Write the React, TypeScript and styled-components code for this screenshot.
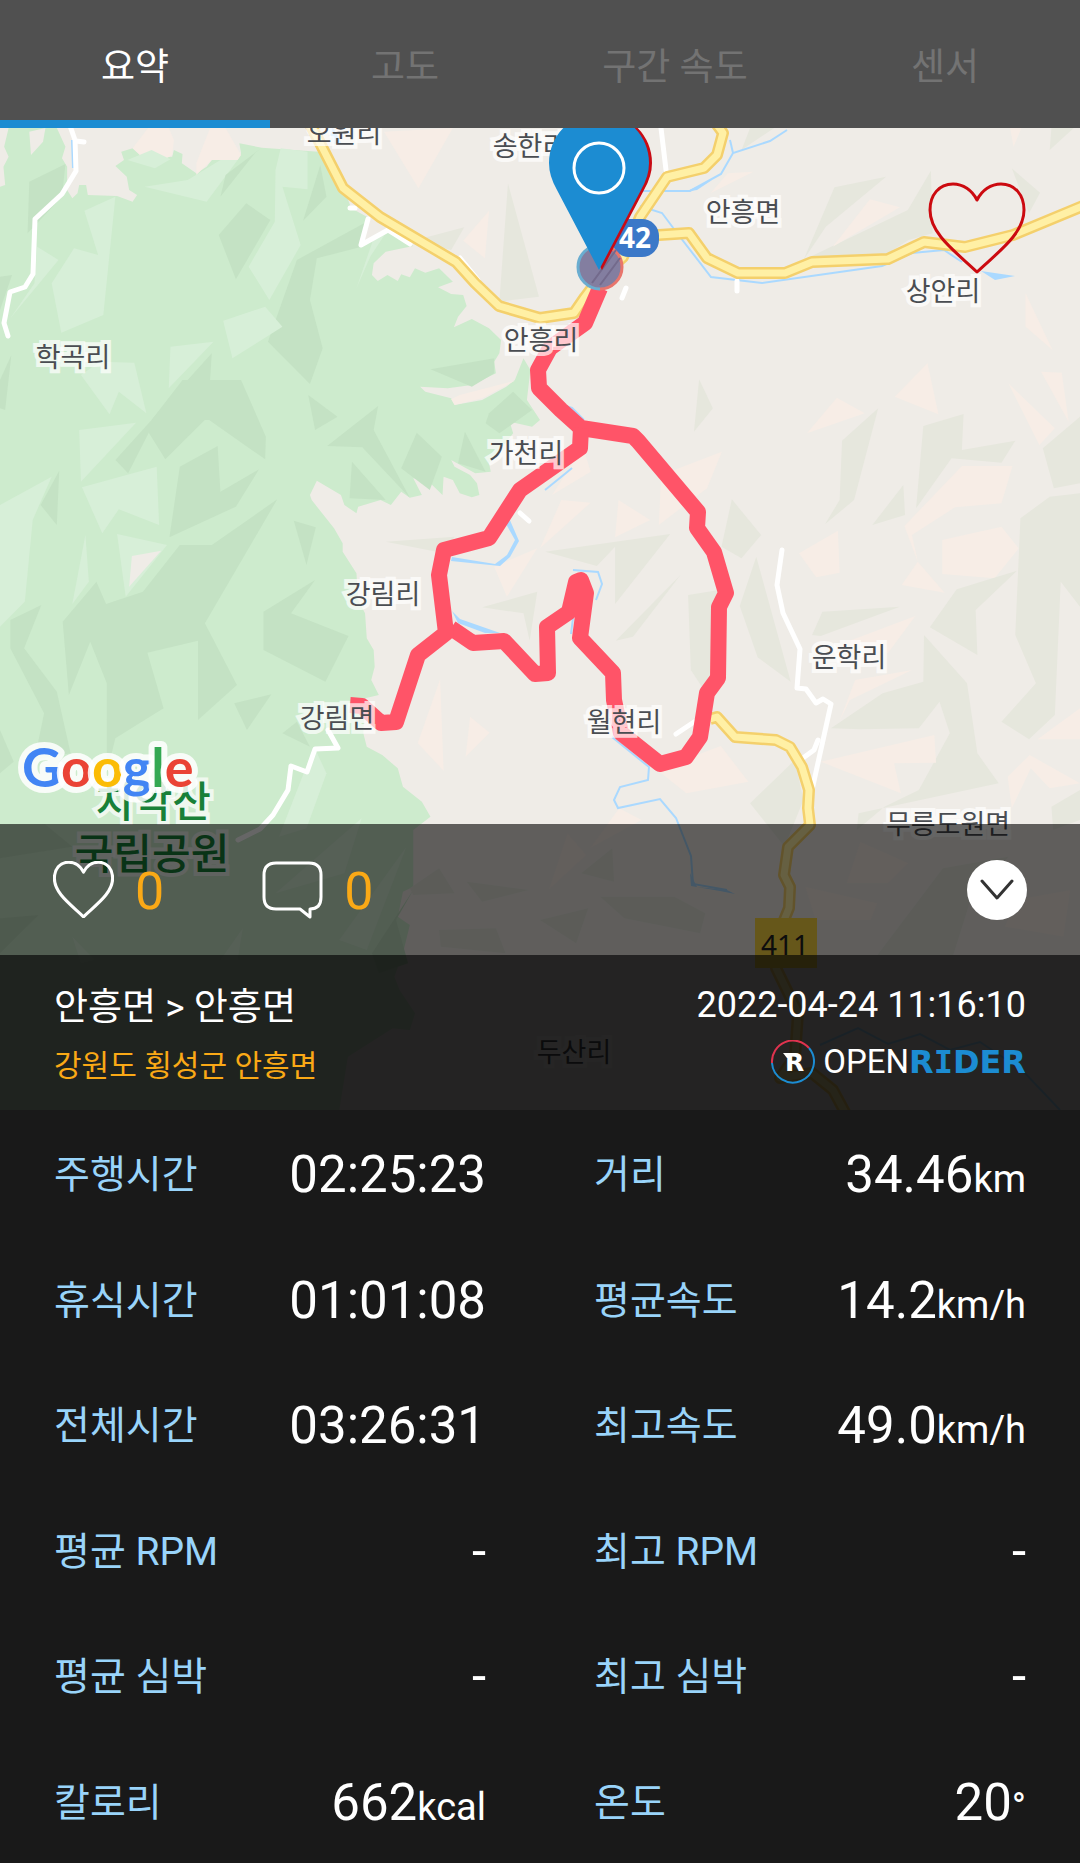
import React, { useState } from "react";
import styled, { createGlobalStyle } from "styled-components";

const color = {
  page: "#191919",
  bar: "#505050",
  accent: "#1c8cd2",
  label: "#99d4fa",
  orange: "#faa916",
  land: "#efece7",
  forest: "#cdebcd",
  forestLight: "#d7efd8",
  forestDark: "#c4e2c4",
  hill: "#e6e7dd",
  sand: "#f7ede6",
  water: "#aad9ff",
  route: "#ff5468",
};

const GlobalStyle = createGlobalStyle`
  *, *::before, *::after { box-sizing: border-box; }
  body {
    margin: 0;
    background: ${color.page};
    color: #fff;
    font-family: Roboto, "Noto Sans CJK KR", sans-serif;
  }
  button { font: inherit; }
`;

const Page = styled.main`
  display: flex;
  flex-direction: column;
  min-height: 100vh;
`;

const TabBar = styled.nav`
  display: grid;
  grid-template-columns: repeat(4, 1fr);
  height: 128px;
  background: ${color.bar};
`;

const Tab = styled.button<{ $active: boolean }>`
  border: 0;
  border-top: 8px solid transparent;
  border-bottom: 8px solid ${(p) => (p.$active ? color.accent : "transparent")};
  padding: 7px 0 0;
  background: none;
  color: ${(p) => (p.$active ? "#fff" : "#737373")};
  font-size: 37px;
  line-height: 52px;
  cursor: pointer;
`;

const Hero = styled.section`
  position: relative;
  display: grid;
`;

const MapCanvas = styled.svg`
  grid-area: 1 / 1;
  display: block;
  width: 100%;
  height: auto;
  background: ${color.land};
`;

const MapLabel = styled.text<{ $park?: boolean }>`
  font-family: "Noto Sans CJK KR", sans-serif;
  font-size: ${(p) => (p.$park ? 42 : 27)}px;
  font-weight: ${(p) => (p.$park ? 500 : 400)};
  fill: ${(p) => (p.$park ? "#188038" : "#4a4d52")};
  stroke: rgba(255, 255, 255, 0.7);
  stroke-width: 8px;
  paint-order: stroke;
  text-anchor: middle;
`;

const RoadNumber = styled.text<{ $bold?: boolean }>`
  font-family: "Noto Sans", sans-serif;
  font-size: 28px;
  font-weight: ${(p) => (p.$bold ? 700 : 400)};
  fill: ${(p) => (p.$bold ? "#fff" : "#222")};
  text-anchor: middle;
`;

const GoogleMark = styled.text`
  font-family: Lato, sans-serif;
  font-size: 54px;
  font-weight: 700;
  stroke: rgba(255, 255, 255, 0.85);
  stroke-width: 12px;
  stroke-linejoin: round;
  paint-order: stroke;
`;

const FavoriteButton = styled.button`
  position: absolute;
  top: 54px;
  right: 54px;
  width: 98px;
  height: 92px;
  padding: 0;
  border: 0;
  background: none;
  color: #cc0a10;
  cursor: pointer;
`;

const Overlay = styled.div`
  grid-area: 1 / 1;
  align-self: end;
  z-index: 1;
`;

const ActionBar = styled.div`
  display: flex;
  align-items: center;
  gap: 98px;
  height: 131px;
  padding: 0 53px;
  background: rgba(0, 0, 0, 0.6);
`;

const CountButton = styled.button`
  display: flex;
  align-items: center;
  gap: 21px;
  padding: 0;
  border: 0;
  background: none;
  color: #fff;
  cursor: pointer;
`;

const Count = styled.span`
  color: ${color.orange};
  font-size: 52px;
  line-height: 60px;
  padding-top: 4px;
`;

const CollapseButton = styled.button`
  display: flex;
  align-items: center;
  justify-content: center;
  width: 60px;
  height: 60px;
  margin-left: auto;
  padding: 0;
  border: 0;
  border-radius: 50%;
  background: #fff;
  color: #333;
  cursor: pointer;
`;

const Icon = styled.svg`
  display: block;
  fill: none;
  stroke: currentColor;
  stroke-linecap: round;
  stroke-linejoin: round;
`;

const RideInfo = styled.header`
  display: grid;
  grid-template-columns: 1fr auto;
  row-gap: 6px;
  align-items: start;
  padding: 24px 54px 18px;
  background: rgba(0, 0, 0, 0.85);
`;

const Title = styled.h1`
  margin: 0;
  padding-top: 3px;
  font-size: 37px;
  font-weight: 400;
  line-height: 52px;
`;

const RideDate = styled.time`
  font-size: 36px;
  line-height: 52px;
  text-align: right;
`;

const Region = styled.p`
  margin: 0;
  color: ${color.orange};
  font-size: 30px;
  line-height: 52px;
`;

const Brand = styled.div`
  display: flex;
  align-items: center;
  justify-content: flex-end;
  height: 44px;
  font-size: 33px;
  line-height: 44px;
`;

const BrandIcon = styled.svg`
  display: block;
  margin-right: 8px;
`;

const BrandBold = styled.b`
  font-family: "DejaVu Sans", sans-serif;
  font-size: 32px;
  font-weight: 700;
  color: ${color.accent};
`;

const Slab = styled.span`
  font-family: "DejaVu Sans Mono", monospace;
`;

const Stats = styled.dl`
  flex: 1;
  display: grid;
  grid-template-columns: 1fr 1fr;
  grid-auto-rows: minmax(100px, 1fr);
  margin: 0;
`;

const Stat = styled.div`
  display: flex;
  align-items: center;
  justify-content: space-between;
  padding: 5px 54px 0;
`;

const StatLabel = styled.dt`
  color: ${color.label};
  font-size: 39px;
  line-height: 60px;
`;

const StatValue = styled.dd`
  margin: 0;
  font-size: 51px;
  line-height: 60px;
`;

const Unit = styled.span`
  font-size: 38px;
  line-height: 1;
`;

type Shape = [fill: string, points: string];

const forestOutline =
  "25,384 165,384 190,440 180,475 195,500 195,570 210,595 225,580 230,555 250,555 255,585 340,588 385,605 398,585 375,570 368,530 335,498 360,480 352,455 385,445 420,478 500,470 505,450 530,462 528,490 570,520 600,500 615,480 690,480 700,460 695,430 760,443 925,455 970,535 1000,570 1020,625 1065,650 1045,740 1120,695 1200,738 1120,755 1085,790 1080,825 1097,843 1125,825 1155,843 1165,823 1190,832 1205,805 1235,818 1275,805 1315,845 1272,862 1310,882 1345,885 1355,918 1330,950 1318,982 1370,957 1420,985 1455,1020 1450,1060 1435,1085 1440,1120 1370,1155 1300,1165 1220,1160 1235,1175 1310,1195 1320,1215 1400,1200 1470,1160 1495,1140 1520,1075 1540,1110 1530,1200 1568,1260 1545,1280 1480,1265 1490,1300 1420,1390 1425,1415 1380,1420 1310,1380 1320,1400 1365,1425 1385,1450 1392,1485 1370,1492 1335,1480 1315,1440 1288,1430 1285,1485 1240,1440 1200,1435 1225,1485 1190,1493 1165,1475 1135,1515 1105,1500 1040,1520 1035,1540 1000,1515 990,1485 920,1442 900,1485 905,1500 970,1585 995,1630 995,1655 1035,1720 1040,1800 1060,1840 1065,1915 1085,1950 1088,2000 1078,2040 1100,2085 1060,2095 1055,2200 1065,2240 1110,2265 1155,2305 1170,2360 1225,2405 1250,2450 1200,2490 1200,2660 1170,2675 1155,2750 1190,2775 1170,2860 1145,2930 1160,2970 1205,3040 1190,3090 1140,3085 1010,3170 985,3330 0,3330 0,560 15,555 10,500 25,470 12,440";

const westNorth: Shape[] = [
  [color.land, "85,395 132,384 125,425 90,465"],
  [color.sand, "430,384 490,384 505,420 500,465 470,482 420,478 385,445"],
  [color.sand, "610,384 655,384 700,465 690,480 615,480 570,525 570,490"],
  [color.forestDark, "85,545 190,492 180,590 80,700"],
  [color.forestLight, "245,632 335,590 300,945 178,998 150,850 215,745 285,765"],
  [color.forestLight, "108,740 170,780 30,955 100,850"],
  [color.forestLight, "370,480 440,450 495,478 450,505"],
  [color.forestLight, "420,560 545,540 640,480 690,480 600,605"],
  [color.forestDark, "640,590 655,525 760,443 740,460"],
  [color.forestDark, "635,705 715,610 785,660 685,838"],
  [color.forestLight, "800,510 815,445 893,455 893,568 820,560 873,735 782,900 722,800 798,665"],
  [color.forestDark, "930,495 948,590 880,662"],
  [color.forestDark, "1065,665 1050,740 920,775 900,900 937,1045 900,1152 778,1025 862,780"],
  [color.forestLight, "1035,865 1085,715 1120,700 1075,770"],
  [color.forestLight, "648,962 770,920 820,980 675,1075"],
  [color.forestLight, "495,1040 620,1025 490,1165"],
  [color.forestLight, "235,1125 290,1085 390,1088 425,1240 345,1175 318,1243"],
  [color.forestDark, "440,1260 615,1060 610,1140 710,1260"],
  [color.forestDark, "0,830 35,825 0,930"],
  [color.forestDark, "0,1140 33,1065 15,1230 0,1225"],
  [color.forestDark, "1250,1108 1435,1075 1435,1120 1370,1160"],
  [color.forestDark, "895,1185 980,1250 915,1290"],
  [color.sand, "1310,1198 1335,1185 1495,1142 1400,1195 1320,1215"],
  [color.sand, "1115,395 1315,384 1215,565"],
  [color.hill, "1475,550 1565,890 1450,905"],
  [color.sand, "1345,722 1420,632 1408,775"],
  [color.hill, "1200,722 1348,682 1310,750"],
];

const westSouth: Shape[] = [
  [color.forestDark, "440,60 530,-60 700,-60 772,110 770,178 600,55 480,178 432,98 372,220 335,180"],
  [color.forestLight, "230,90 395,68 235,245"],
  [color.forestLight, "238,262 455,200 462,375 345,328 297,400"],
  [color.forestDark, "632,138 640,275 752,208 685,320 492,412 522,200"],
  [color.forestDark, "172,212 165,375 118,315"],
  [color.forestLight, "150,230 95,360 72,605 0,680 0,315"],
  [color.forestDark, "805,298 595,670 688,855 575,960 575,722 428,758 475,925 335,1015 310,1120 310,850 262,725 200,885 182,665 280,545 308,612 415,575 522,435 615,435"],
  [color.forestLight, "248,405 258,545 210,612"],
  [color.forestLight, "340,402 485,435 365,590"],
  [color.land, "383,468 468,452 375,560"],
  [color.forestDark, "30,660 120,615 70,745 165,875 205,1060 100,1080 128,940 30,745"],
  [color.forestDark, "853,362 917,382 890,495"],
  [color.forestDark, "950,138 1098,18 1085,90 1190,293 1052,142"],
  [color.forestDark, "1210,98 1283,170 1248,270 1165,205"],
  [color.forestDark, "1350,95 1410,215 1330,190"],
  [color.forestDark, "1022,185 1120,300 1015,295"],
  [color.forestDark, "1420,40 1490,-25 1545,30 1450,100 1410,70"],
  [color.forestDark, "915,540 845,640 1012,708 945,845 765,750 765,635"],
  [color.forestDark, "680,910 788,883 717,990"],
  [color.forestDark, "820,1000 862,965 900,1040"],
  [color.forestDark, "0,990 40,1085 0,1120"],
  [color.forestLight, "912,1040 948,1120 890,1285 810,1310"],
  [color.hill, "1120,425 1320,410 1290,460"],
  [color.sand, "1435,500 1560,445 1472,590"],
  [color.hill, "1400,622 1560,575 1538,722 1520,640"],
  [color.sand, "1278,838 1288,1112 1213,1030"],
  [color.sand, "1365,950 1422,998 1352,1070"],
  [color.forestDark, "0,1275 130,1272 210,1340 0,1375"],
  [color.forestLight, "800,1480 1050,1255 1000,1420"],
  [color.forestLight, "985,1620 1180,1340 1065,1650"],
  [color.forestDark, "1080,1660 1200,1470 1150,1560 1185,1690 1100,1720"],
  [color.forestDark, "0,1555 112,1545 0,1660"],
  [color.forestLight, "210,1610 275,1680 235,1690"],
  [color.forestLight, "705,1585 690,1680 640,1680"],
  [color.hill, "1190,1465 1275,1405 1320,1480 1200,1485"],
  [color.hill, "1355,1445 1535,1470 1400,1505"],
  [color.hill, "1275,1590 1440,1585 1468,1660 1280,1640"],
];

const eastNorth: Shape[] = [
  [color.hill, "610,384 680,384 585,450"],
  [color.sand, "1365,384 1398,384 1375,440"],
  [color.hill, "1485,384 1550,384 1480,450"],
  [color.hill, "855,562 1005,530 830,680 765,780"],
  [color.sand, "545,520 620,515 495,580"],
  [color.hill, "1135,512 1140,700 1070,720 980,780 765,780 1068,630"],
  [color.sand, "958,598 1045,622 850,740"],
  [color.hill, "1370,505 1452,578 1420,640"],
  [color.sand, "1410,880 1488,1050 1410,980"],
  [color.sand, "1125,1090 1157,1243 1030,1190"],
  [color.sand, "1455,1115 1515,1118 1535,1265"],
  [color.sand, "1360,1150 1495,1285 1450,1335"],
  [color.hill, "462,1138 502,1225 447,1295"],
  [color.sand, "862,1193 943,1240 775,1300"],
];

const eastSouth: Shape[] = [
  [color.hill, "982,25 912,300 828,372 870,300 877,122"],
  [color.hill, "1113,78 1230,42 1225,150 1380,122 1340,188 1195,175 1092,325"],
  [color.sand, "1225,198 1372,198 1340,310 1205,322 1080,405 1097,485 1058,378"],
  [color.hill, "1055,255 1060,345 965,375"],
  [color.hill, "1568,50 1568,250 1492,265 1460,145"],
  [color.hill, "1568,280 1568,620 1512,545 1495,945 1420,1018 1340,965 1440,850 1380,705 1395,355 1480,290"],
  [color.sand, "1168,420 1340,380 1390,445 1320,535 1168,522"],
  [color.sand, "865,392 870,518 802,532 752,460"],
  [color.sand, "1080,405 1097,485 1175,578 1050,555 1097,485"],
  [color.hill, "1210,568 1385,512 1265,630 1270,765 1132,682"],
  [color.sand, "125,140 147,215 35,285"],
  [color.sand, "62,300 147,308 0,445"],
  [color.sand, "228,300 320,360 218,412"],
  [color.sand, "352,225 528,155 485,265 345,375"],
  [color.hill, "15,455 378,402 218,612 218,440 165,498"],
  [color.hill, "408,525 270,710 220,722"],
  [color.hill, "557,298 642,405 585,475 527,440"],
  [color.hill, "628,470 728,845 632,772 580,618"],
  [color.hill, "430,585 520,570 498,860 470,860 438,810"],
  [color.hill, "820,635 1045,620 815,708 790,705"],
  [color.sand, "1090,648 1010,760 880,730"],
  [color.hill, "1115,705 1240,850 1270,1060 1332,1150 925,1240 920,1290 1000,1220 1100,1170 1190,1000 1160,905 1100,985 930,988 845,985 995,880 1113,845"],
  [color.sand, "1080,810 915,840 870,962 900,900"],
  [color.sand, "815,1085 1145,1005 1150,1088 1028,1090 1048,1180"],
  [color.sand, "1568,925 1568,1018 1445,1018"],
  [color.sand, "1422,1065 1568,1150 1480,1165 1425,1105 1370,1225 1358,1130"],
  [color.hill, "1485,1220 1568,1170 1568,1260 1490,1290"],
  [color.sand, "340,1110 525,1038 605,1145 425,1180"],
  [color.hill, "740,1080 765,1200 710,1340 610,1210"],
  [color.sand, "230,1225 295,1260 145,1345"],
  [color.sand, "80,1300 135,1365 25,1470"],
  [color.hill, "210,1345 215,1445 120,1420"],
  [color.sand, "930,1325 1070,1390 1010,1450 890,1450"],
  [color.sand, "770,1460 980,1510 960,1560 800,1560"],
  [color.hill, "175,1490 390,1490 480,1540 465,1600 245,1555"],
  [color.hill, "0,1560 140,1525 105,1630"],
  [color.hill, "1170,1405 1360,1370 1250,1500 1200,1665 980,1665"],
  [color.sand, "1380,1500 1540,1470 1520,1610 1350,1580"],
];

function Terrain({ x, y, shapes }: { x: number; y: number; shapes: Shape[] }) {
  return (
    <g transform={`translate(${x} ${y}) scale(0.34439 0.33333)`}>
      {shapes.map(([fill, points]) => (
        <polygon key={points} fill={fill} points={points} />
      ))}
    </g>
  );
}

const highways = [
  "308,120 322,147 343,188 380,217 456,262 475,283 499,306 540,318 574,313 585,297 600,277 623,257 640,217 667,177 704,168 717,155 723,133 712,118",
  "640,238 659,235 689,233 707,258 738,273 785,273 812,262 888,259 924,242 965,247 1013,235 1090,203",
  "710,719 717,717 735,737 776,740 790,747 802,767 809,790 808,808 810,825 788,847 784,875 790,887 789,908 776,940 776,968 798,1013 795,1057 780,1078 812,1073 833,1090 847,1116",
];

const lanes = [
  "68,120 75,140 76,171 62,194 35,219 33,274 25,287 10,292 4,323 8,336",
  "76,141 84,142",
  "368,219 361,245 388,230 410,244",
  "350,208 355,208",
  "460,258 478,280",
  "661,128 666,170",
  "626,288 622,298",
  "737,281 737,291",
  "520,513 529,521",
  "782,550 777,585 783,613 800,649 797,688 806,689 816,703 823,699 831,704 812,790",
  "818,740 814,750 803,758",
  "676,734 694,722",
  "328,730 338,748 315,749 307,772 291,766 288,790 273,815 260,829 238,840",
];

const streams = [
  "72,140 73,168",
  "787,130 770,141 733,153 721,174 690,191 640,191",
  "730,140 733,153",
  "640,206 662,213 677,233 711,277 762,283 882,266 912,253 944,250 962,262",
  "572,468 566,473 545,490",
  "562,405 572,408 584,420",
  "573,570 598,572 602,584 596,600",
  "573,618 571,634",
  "612,737 649,767 648,780 620,787 614,800 618,808 660,799 676,818 691,856 693,884 727,890",
  "820,1045 858,1028 888,1044 920,1034 950,1050 980,1042 1022,1070 1060,1110",
];

const route = [
  "600,288 585,323 550,348 538,370 539,388 561,410 581,428 633,436 638,441 698,512 697,528 714,552 726,593 719,607 718,678 707,693 700,737 686,757 660,764 621,733 614,700 613,673 580,638 586,593 581,580 576,582 569,612 547,627 548,673 535,674 504,641 473,643 451,628",
  "581,428 580,448 540,476 520,490 489,538 444,550 439,575 446,633 418,655 396,722 381,723 362,706 350,705",
];

const places: [name: string, x: number, y: number][] = [
  ["오원리", 344, 143],
  ["송한리", 530, 156],
  ["안흥면", 743, 222],
  ["상안리", 943, 301],
  ["안흥리", 541, 350],
  ["학곡리", 73, 367],
  ["가천리", 526, 463],
  ["강림리", 383, 604],
  ["강림면", 337, 728],
  ["월현리", 624, 732],
  ["운학리", 849, 667],
  ["무릉도원면", 948, 834],
  ["두산리", 574, 1062],
];

const pinShape = "M599 270 L557 190 Q549 176 549 163 A50 50 0 0 1 649 163 Q649 176 641 190 Z";

function RouteMap() {
  return (
    <MapCanvas viewBox="0 128 1080 982" role="img" aria-label="주행 경로 지도">
      <g transform="scale(0.34439 0.33333)">
        <polygon fill={color.forest} points={forestOutline} />
      </g>
      <Terrain x={0} y={0} shapes={westNorth} />
      <Terrain x={0} y={400} shapes={westSouth} />
      <Terrain x={540} y={0} shapes={eastNorth} />
      <Terrain x={540} y={400} shapes={eastSouth} />

      <g fill="none" stroke={color.water} strokeWidth={2}>
        {streams.map((points) => (
          <polyline key={points} points={points} />
        ))}
      </g>
      <g fill={color.water}>
        <path d="M981 271 L1015 276 L995 280Z M328 128 L334 144 L342 144 L333 128Z M509 518 L519 541 L510 557 L500 566 L451 561 L452 557 L495 564 L507 555 L515 540 L506 524Z M452 611 L460 619 L500 633 L485 633 L458 623Z M685 192 L712 180 L697 190Z M690 873 L697 887 L727 890 L735 894 L720 891 L691 886Z" />
      </g>
      <g fill="none" stroke="#fff" strokeWidth={5} strokeLinecap="round" strokeLinejoin="round">
        {lanes.map((points) => (
          <polyline key={points} points={points} />
        ))}
      </g>
      <g fill="none" strokeLinejoin="round">
        {highways.map((points) => (
          <polyline key={points} points={points} stroke="#f4d06c" strokeWidth={12} />
        ))}
        {highways.map((points) => (
          <polyline key={points} points={points} stroke="#fff0a5" strokeWidth={7} />
        ))}
      </g>
      <rect x={755} y={918} width={62} height={50} fill="#ffd943" />
      <RoadNumber x={785} y={955}>411</RoadNumber>
      <g fill="none" stroke={color.route} strokeWidth={16} strokeLinejoin="round">
        {route.map((points) => (
          <polyline key={points} points={points} />
        ))}
      </g>

      {places.map(([name, x, y]) => (
        <MapLabel key={name} x={x} y={y}>{name}</MapLabel>
      ))}
      <MapLabel $park x={153} y={817}>치악산</MapLabel>
      <MapLabel $park x={152} y={869}>국립공원</MapLabel>

      <rect x={612} y={219} width={47} height={38} rx={17} fill="#3b78c8" />
      <RoadNumber $bold x={635} y={248}>42</RoadNumber>

      <circle cx={600} cy={267} r={22} fill="#837ea0" />
      <path d="M600 289 A22 22 0 0 1 600 245" fill="none" stroke="#6aadd0" strokeWidth={3} />
      <path d="M600 289 A22 22 0 0 0 600 245" fill="none" stroke="#e8756c" strokeWidth={3} />
      <path d="M592 283 L616 250 M600 285 L620 258" stroke="#736a8c" strokeWidth={2} />
      <path d={pinShape} fill="#c80a14" transform="translate(3 0)" />
      <path d={pinShape} fill={color.accent} />
      <circle cx={599} cy={168} r={25} fill="none" stroke="#fff" strokeWidth={3} />

      <GoogleMark x={22} y={787}>
        <tspan fill="#4285f4">G</tspan>
        <tspan fill="#ea4335">o</tspan>
        <tspan fill="#fbbc05">o</tspan>
        <tspan fill="#4285f4">g</tspan>
        <tspan fill="#34a853">l</tspan>
        <tspan fill="#ea4335">e</tspan>
      </GoogleMark>
    </MapCanvas>
  );
}

function HeartIcon({ width, height, line }: { width: number; height: number; line: number }) {
  return (
    <Icon width={width} height={height} viewBox="0 0 98 92" strokeWidth={line} aria-hidden="true">
      <path d="M49 18 C44 8 35 2 25 2 C11 2 2 13 2 28 C2 52 28 70 49 90 C70 70 96 52 96 28 C96 13 87 2 73 2 C63 2 54 8 49 18Z" />
    </Icon>
  );
}

function CommentIcon() {
  return (
    <Icon width={61} height={58} viewBox="0 0 61 58" strokeWidth={3} aria-hidden="true">
      <path d="M14 2 H47 Q59 2 59 14 V36 Q59 48 48 48 V56 L38 48 H14 Q2 48 2 36 V14 Q2 2 14 2Z" />
    </Icon>
  );
}

function OpenRiderIcon() {
  return (
    <BrandIcon width={44} height={44} viewBox="0 0 44 44" aria-hidden="true">
      <g fill="none" strokeWidth={2}>
        <path d="M1 23 A21 21 0 0 1 38 8" stroke="#e0334f" />
        <path d="M38 8 A21 21 0 1 1 1 23" stroke={color.accent} />
      </g>
      <path d="M12 13 H19 V18 H16Z" fill="#fff" />
      <text x={14} y={31} fill="#fff" fontFamily="DejaVu Sans" fontWeight={700} fontSize={25}>R</text>
    </BrandIcon>
  );
}

const tabs = ["요약", "고도", "구간 속도", "센서"];

const stats: { label: string; value: string; unit?: string }[] = [
  { label: "주행시간", value: "02:25:23" },
  { label: "거리", value: "34.46", unit: "km" },
  { label: "휴식시간", value: "01:01:08" },
  { label: "평균속도", value: "14.2", unit: "km/h" },
  { label: "전체시간", value: "03:26:31" },
  { label: "최고속도", value: "49.0", unit: "km/h" },
  { label: "평균 RPM", value: "-" },
  { label: "최고 RPM", value: "-" },
  { label: "평균 심박", value: "-" },
  { label: "최고 심박", value: "-" },
  { label: "칼로리", value: "662", unit: "kcal" },
  { label: "온도", value: "20", unit: "°" },
];

export default function App() {
  const [active, setActive] = useState(tabs[0]);
  return (
    <Page>
      <GlobalStyle />
      <TabBar>
        {tabs.map((tab) => (
          <Tab key={tab} type="button" $active={tab === active} onClick={() => setActive(tab)}>
            {tab}
          </Tab>
        ))}
      </TabBar>
      <Hero>
        <RouteMap />
        <FavoriteButton type="button" aria-label="즐겨찾기">
          <HeartIcon width={98} height={92} line={3} />
        </FavoriteButton>
        <Overlay>
          <ActionBar>
            <CountButton type="button" aria-label="좋아요">
              <HeartIcon width={61} height={57} line={5} />
              <Count>0</Count>
            </CountButton>
            <CountButton type="button" aria-label="댓글">
              <CommentIcon />
              <Count>0</Count>
            </CountButton>
            <CollapseButton type="button" aria-label="접기">
              <Icon width={34} height={22} viewBox="0 0 34 22" strokeWidth={3} aria-hidden="true">
                <path d="M2 2 L17 19 L32 2" />
              </Icon>
            </CollapseButton>
          </ActionBar>
          <RideInfo>
            <Title>안흥면 &gt; 안흥면</Title>
            <RideDate dateTime="2022-04-24T11:16:10">2022-04-24 11:16:10</RideDate>
            <Region>강원도 횡성군 안흥면</Region>
            <Brand>
              <OpenRiderIcon />
              <span>OPEN</span>
              <BrandBold>
                R<Slab>I</Slab>DER
              </BrandBold>
            </Brand>
          </RideInfo>
        </Overlay>
      </Hero>
      <Stats>
        {stats.map(({ label, value, unit }) => (
          <Stat key={label}>
            <StatLabel>{label}</StatLabel>
            <StatValue>
              {value}
              {unit && <Unit>{unit}</Unit>}
            </StatValue>
          </Stat>
        ))}
      </Stats>
    </Page>
  );
}
